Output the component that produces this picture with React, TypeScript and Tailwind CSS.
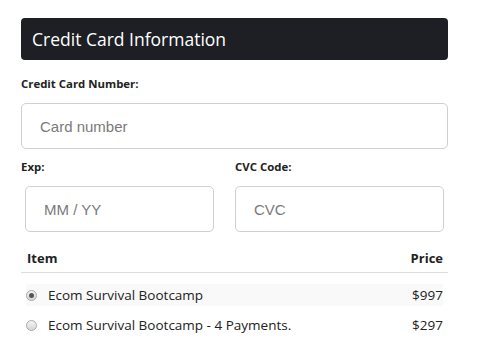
const items = [
  { name: 'Ecom Survival Bootcamp', price: '$997', checked: true },
  { name: 'Ecom Survival Bootcamp - 4 Payments.', price: '$297', checked: false },
];

function Radio({ checked }: { checked: boolean }) {
  return (
    <span className="flex h-[11px] w-[11px] shrink-0 items-center justify-center rounded-full border border-[#a9a9a9] bg-gradient-to-b from-[#f4f4f4] to-[#d6d6d6]">
      {checked && <span className="h-[5px] w-[5px] rounded-full bg-[#555]" />}
    </span>
  );
}

export default function App() {
  return (
    <div className="min-h-screen bg-white font-['Open_Sans',sans-serif] text-[#222]">
      <div className="ml-[21px] w-[427px] pt-[18px]">
        <div className="flex h-[42px] items-center rounded-[4px] bg-[#1d1f25] px-[11px] text-[17.5px] text-white">
          Credit Card Information
        </div>

        <label className="mt-[17px] block text-[11.4px] font-bold leading-[14px] text-[#222]">
          Credit Card Number:
        </label>
        <input
          placeholder="Card number"
          className="mt-[12px] block h-[46px] w-full rounded-[5px] border border-[#cfcfd4] px-[18px] font-['Liberation_Sans',sans-serif] text-[15px] text-[#555] placeholder:text-[#7a7a7a] outline-none"
        />

        <div className="mt-[11px] flex">
          <div className="w-[214px]">
            <label className="block text-[11.4px] font-bold leading-[14px]">Exp:</label>
            <input
              placeholder="MM / YY"
              className="ml-[4px] mt-[12px] block h-[46px] w-[189px] rounded-[5px] border border-[#cfcfd4] px-[18px] font-['Liberation_Sans',sans-serif] text-[15px] placeholder:text-[#7a7a7a] outline-none"
            />
          </div>
          <div>
            <label className="block text-[11.4px] font-bold leading-[14px]">CVC Code:</label>
            <input
              placeholder="CVC"
              className="mt-[12px] block h-[46px] w-[209px] rounded-[5px] border border-[#cfcfd4] px-[18px] font-['Liberation_Sans',sans-serif] text-[15px] placeholder:text-[#7a7a7a] outline-none"
            />
          </div>
        </div>

        <div className="mt-[13px] flex h-[28px] items-center justify-between border-b border-[#dcdcdc] pl-[6px] pr-[5px] text-[13px] font-bold">
          <span>Item</span>
          <span>Price</span>
        </div>

        <div className="mt-[11px] flex flex-col gap-[8px] px-[5px]">
          {items.map((it) => (
            <div
              key={it.name}
              className={`flex h-[22px] items-center justify-between ${it.checked ? 'bg-[#f9f9f9]' : ''}`}
            >
              <div className="flex items-center gap-[11px]">
                <Radio checked={it.checked} />
                <span className="text-[13.5px]">{it.name}</span>
              </div>
              <span className="text-[13.5px]">{it.price}</span>
            </div>
          ))}
        </div>
      </div>
    </div>
  );
}
